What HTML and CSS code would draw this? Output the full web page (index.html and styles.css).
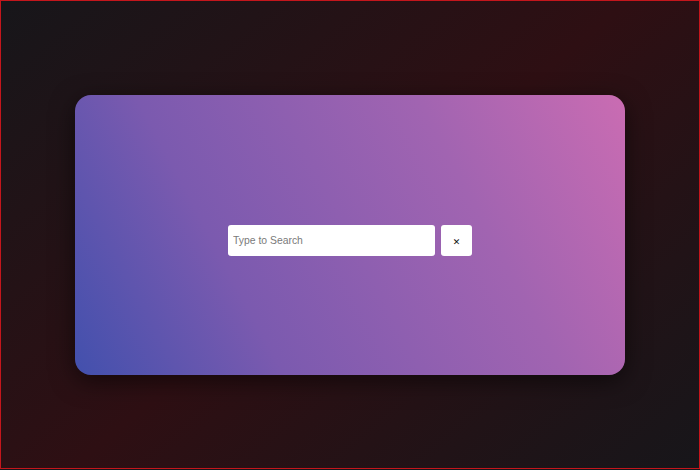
FILE: index.html
```html
<!DOCTYPE html>
<html>
<head>
<meta charset="utf-8">
<link rel="stylesheet" href="styles.css">
</head>
<body>
<div class="frame">
  <div class="card">
    <form class="search">
      <input class="search-input" type="text" placeholder="Type to Search">
      <button class="search-clear" type="button">&#x2715;</button>
    </form>
  </div>
</div>
</body>
</html>
```

FILE: styles.css
```css
html, body {
  margin: 0;
  padding: 0;
  background: #17161a;
  height: 100%;
}
body {
  font-family: "Liberation Sans", Arial, sans-serif;
}
.frame {
  box-sizing: border-box;
  height: 469px;
  width: 700px;
  border: 1px solid #c4161c;
  background: linear-gradient(140deg, #17161a 0%, #2e0f13 50%, #17161a 100%);
  display: flex;
  align-items: center;
  justify-content: center;
}
.card {
  width: 550px;
  height: 280px;
  margin-top: 1px;
  border-radius: 16px;
  background: linear-gradient(62deg, #4250ad 0%, #7b5aaf 30%, #a164b1 70%, #ca6cb2 100%);
  box-shadow: 0 6px 24px rgba(0, 0, 0, 0.55);
  display: flex;
  align-items: center;
  justify-content: center;
}
.search {
  display: flex;
  gap: 6px;
  margin: 0;
  margin-top: 10px;
}
.search-input {
  box-sizing: border-box;
  width: 207px;
  height: 31px;
  border: none;
  border-radius: 3px;
  padding: 0 5px;
  font-family: "Liberation Sans", Arial, sans-serif;
  font-size: 10.4px;
  color: #333;
  background: #fff;
  outline: none;
}
.search-input::placeholder {
  color: #7a7a7a;
}
.search-clear {
  box-sizing: border-box;
  width: 31px;
  height: 31px;
  border: none;
  border-radius: 3px;
  background: #fff;
  font-size: 9px;
  font-weight: bold;
  color: #111;
  padding: 0;
  padding-top: 4px;
  font-family: "DejaVu Sans", sans-serif;
}
```
